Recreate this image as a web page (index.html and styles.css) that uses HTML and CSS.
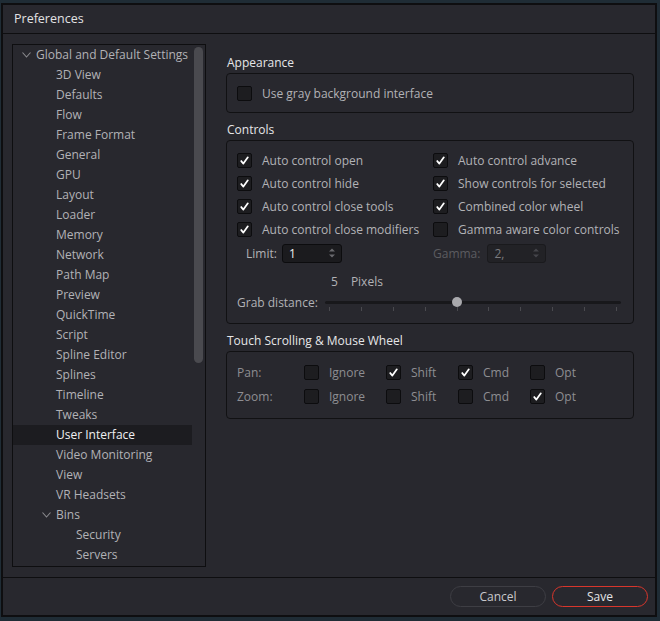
FILE: index.html
```html
<!DOCTYPE html>
<html>
<head>
<meta charset="utf-8">
<link rel="stylesheet" href="styles.css">
</head>
<body>
<div class="window">
  <div class="titlebar">Preferences</div>
  <div class="main">
    <div class="tree">
      <ul class="tree-list">
        <li class="lvl0"><svg class="chev" width="9" height="6" viewBox="0 0 9 6"><polyline points="0.5,0.5 4.5,5 8.5,0.5" fill="none" stroke="#8a8a8e" stroke-width="1.1"/></svg>Global and Default Settings</li>
        <li class="lvl1">3D View</li>
        <li class="lvl1">Defaults</li>
        <li class="lvl1">Flow</li>
        <li class="lvl1">Frame Format</li>
        <li class="lvl1">General</li>
        <li class="lvl1">GPU</li>
        <li class="lvl1">Layout</li>
        <li class="lvl1">Loader</li>
        <li class="lvl1">Memory</li>
        <li class="lvl1">Network</li>
        <li class="lvl1">Path Map</li>
        <li class="lvl1">Preview</li>
        <li class="lvl1">QuickTime</li>
        <li class="lvl1">Script</li>
        <li class="lvl1">Spline Editor</li>
        <li class="lvl1">Splines</li>
        <li class="lvl1">Timeline</li>
        <li class="lvl1">Tweaks</li>
        <li class="lvl1 selected">User Interface</li>
        <li class="lvl1">Video Monitoring</li>
        <li class="lvl1">View</li>
        <li class="lvl1">VR Headsets</li>
        <li class="lvl1 has-chev"><svg class="chev" width="9" height="6" viewBox="0 0 9 6"><polyline points="0.5,0.5 4.5,5 8.5,0.5" fill="none" stroke="#8a8a8e" stroke-width="1.1"/></svg>Bins</li>
        <li class="lvl2">Security</li>
        <li class="lvl2">Servers</li>
      </ul>
      <div class="scroll-track"><div class="scroll-thumb"></div></div>
    </div>

    <div class="settings">
      <div class="heading first">Appearance</div>
      <div class="group group-appearance">
        <label class="cb-row"><span class="cb"></span><span class="cb-text">Use gray background interface</span></label>
      </div>

      <div class="heading">Controls</div>
      <div class="group group-controls">
        <div class="cb-grid">
          <label class="cb-row"><span class="cb checked"><svg viewBox="0 0 14 14"><path d="M3.5 7.6 L5.8 10.3 L10.6 3.6" fill="none" stroke="#fff" stroke-width="1.9" stroke-linecap="round" stroke-linejoin="round"/></svg></span><span class="cb-text">Auto control open</span></label>
          <label class="cb-row"><span class="cb checked"><svg viewBox="0 0 14 14"><path d="M3.5 7.6 L5.8 10.3 L10.6 3.6" fill="none" stroke="#fff" stroke-width="1.9" stroke-linecap="round" stroke-linejoin="round"/></svg></span><span class="cb-text">Auto control advance</span></label>
          <label class="cb-row"><span class="cb checked"><svg viewBox="0 0 14 14"><path d="M3.5 7.6 L5.8 10.3 L10.6 3.6" fill="none" stroke="#fff" stroke-width="1.9" stroke-linecap="round" stroke-linejoin="round"/></svg></span><span class="cb-text">Auto control hide</span></label>
          <label class="cb-row"><span class="cb checked"><svg viewBox="0 0 14 14"><path d="M3.5 7.6 L5.8 10.3 L10.6 3.6" fill="none" stroke="#fff" stroke-width="1.9" stroke-linecap="round" stroke-linejoin="round"/></svg></span><span class="cb-text">Show controls for selected</span></label>
          <label class="cb-row"><span class="cb checked"><svg viewBox="0 0 14 14"><path d="M3.5 7.6 L5.8 10.3 L10.6 3.6" fill="none" stroke="#fff" stroke-width="1.9" stroke-linecap="round" stroke-linejoin="round"/></svg></span><span class="cb-text">Auto control close tools</span></label>
          <label class="cb-row"><span class="cb checked"><svg viewBox="0 0 14 14"><path d="M3.5 7.6 L5.8 10.3 L10.6 3.6" fill="none" stroke="#fff" stroke-width="1.9" stroke-linecap="round" stroke-linejoin="round"/></svg></span><span class="cb-text">Combined color wheel</span></label>
          <label class="cb-row"><span class="cb checked"><svg viewBox="0 0 14 14"><path d="M3.5 7.6 L5.8 10.3 L10.6 3.6" fill="none" stroke="#fff" stroke-width="1.9" stroke-linecap="round" stroke-linejoin="round"/></svg></span><span class="cb-text">Auto control close modifiers</span></label>
          <label class="cb-row"><span class="cb"></span><span class="cb-text">Gamma aware color controls</span></label>
        </div>
        <div class="spin-row">
          <div class="spin-field">
            <span class="spin-label">Limit:</span>
            <div class="spin"><span class="spin-val">1</span><svg class="spin-arrows" width="8" height="12" viewBox="0 0 8 12"><path d="M1 4.5 L4 1.5 L7 4.5 Z M1 7.5 L4 10.5 L7 7.5 Z" fill="#6a6a6e"/></svg></div>
          </div>
          <div class="spin-field disabled">
            <span class="spin-label">Gamma:</span>
            <div class="spin"><span class="spin-val">2,</span><svg class="spin-arrows" width="8" height="12" viewBox="0 0 8 12"><path d="M1 4.5 L4 1.5 L7 4.5 Z M1 7.5 L4 10.5 L7 7.5 Z" fill="#45454a"/></svg></div>
          </div>
        </div>
        <div class="pixels-row"><span class="px-num">5</span><span>Pixels</span></div>
        <div class="grab-row">
          <span class="grab-label">Grab distance:</span>
          <div class="slider">
            <div class="slider-track"></div>
            <div class="slider-thumb"></div>
            <div class="ticks">
              <i></i><i></i><i></i><i></i><i></i><i></i><i></i><i></i><i></i><i></i>
            </div>
          </div>
        </div>
      </div>

      <div class="heading">Touch Scrolling &amp; Mouse Wheel</div>
      <div class="group group-touch">
        <div class="touch-grid">
          <span class="t-label">Pan:</span>
          <label class="cb-row"><span class="cb"></span><span class="cb-text">Ignore</span></label>
          <label class="cb-row"><span class="cb checked"><svg viewBox="0 0 14 14"><path d="M3.5 7.6 L5.8 10.3 L10.6 3.6" fill="none" stroke="#fff" stroke-width="1.9" stroke-linecap="round" stroke-linejoin="round"/></svg></span><span class="cb-text">Shift</span></label>
          <label class="cb-row"><span class="cb checked"><svg viewBox="0 0 14 14"><path d="M3.5 7.6 L5.8 10.3 L10.6 3.6" fill="none" stroke="#fff" stroke-width="1.9" stroke-linecap="round" stroke-linejoin="round"/></svg></span><span class="cb-text">Cmd</span></label>
          <label class="cb-row"><span class="cb"></span><span class="cb-text">Opt</span></label>
          <span class="t-label">Zoom:</span>
          <label class="cb-row"><span class="cb"></span><span class="cb-text">Ignore</span></label>
          <label class="cb-row"><span class="cb"></span><span class="cb-text">Shift</span></label>
          <label class="cb-row"><span class="cb"></span><span class="cb-text">Cmd</span></label>
          <label class="cb-row"><span class="cb checked"><svg viewBox="0 0 14 14"><path d="M3.5 7.6 L5.8 10.3 L10.6 3.6" fill="none" stroke="#fff" stroke-width="1.9" stroke-linecap="round" stroke-linejoin="round"/></svg></span><span class="cb-text">Opt</span></label>
        </div>
      </div>
    </div>
  </div>
  <div class="footer">
    <button class="btn">Cancel</button>
    <button class="btn save">Save</button>
  </div>
</div>
</body>
</html>
```

FILE: styles.css
```css
* { box-sizing: border-box; }

html, body {
  margin: 0;
  padding: 0;
}

body {
  width: 660px;
  height: 621px;
  background: #1f2c35;
  font-family: "Open Sans", "DejaVu Sans", sans-serif;
  font-size: 12px;
  color: #b4b4b8;
  padding: 3px 0 0 1px;
  overflow: hidden;
}

.window {
  width: 656px;
  height: 614px;
  background: #28282e;
  border: 2px solid #0e0e10;
  display: flex;
  flex-direction: column;
}

.titlebar {
  height: 29px;
  flex: none;
  border-bottom: 1px solid #0e0e10;
  padding-left: 11px;
  line-height: 28px;
  font-size: 12.5px;
  color: #e2e2e4;
}

.main {
  flex: 1;
  display: flex;
  padding: 10px 0 10px 9px;
  border-bottom: 1px solid #0e0e10;
}

/* ---- tree ---- */
.tree {
  width: 194px;
  flex: none;
  border: 1px solid #0e0e10;
  display: flex;
  padding-right: 2px;
}

.tree-list {
  list-style: none;
  margin: 0;
  padding: 0;
  width: 179px;
  flex: none;
}

.tree-list li {
  height: 20px;
  line-height: 20px;
  white-space: nowrap;
  display: flex;
  align-items: center;
  color: #b2b2b6;
}

.tree-list .lvl0 { padding-left: 9px; }
.tree-list .lvl1 { padding-left: 43px; }
.tree-list .lvl1.has-chev { padding-left: 29px; }
.tree-list .lvl2 { padding-left: 63px; }

.chev { margin-right: 5px; flex: none; }

.tree-list li.selected {
  background: #1c1c20;
  color: #f0f0f2;
}

.scroll-track {
  flex: 1;
  padding: 2px 0 0 2px;
}

.scroll-thumb {
  width: 9px;
  height: 316px;
  background: #4a4a4f;
  border-radius: 5px;
}

/* ---- settings ---- */
.settings {
  width: 408px;
  margin-left: 20px;
  display: flex;
  flex-direction: column;
}

.heading {
  height: 16px;
  line-height: 16px;
  margin: 9px 0 2px 1px;
  color: #e6e6e8;
  font-size: 12px;
}

.heading.first { margin-top: 11px; }

.group {
  border: 1px solid #111113;
  border-radius: 4px;
  padding: 0 10px;
}

.group-appearance {
  height: 40px;
  display: flex;
  align-items: center;
}

.cb-row {
  display: flex;
  align-items: center;
  white-space: nowrap;
}

.cb {
  width: 15px;
  height: 15px;
  flex: none;
  background: #1d1d20;
  border: 1px solid #0c0c0e;
  border-radius: 2px;
  display: flex;
  align-items: center;
  justify-content: center;
}

.cb svg { width: 13px; height: 13px; }

.cb-text {
  margin-left: 10px;
  color: #b2b2b6;
}

.group-controls {
  height: 184px;
  padding-top: 8px;
}

.cb-grid {
  display: grid;
  grid-template-columns: 196px auto;
  grid-auto-rows: 23px;
}

.spin-row {
  display: flex;
  height: 24px;
  align-items: center;
}

.spin-field {
  display: flex;
  align-items: center;
}

.spin-field:first-child {
  width: 196px;
  padding-left: 9px;
}

.spin-label { margin-right: 5px; color: #b2b2b6; }

.spin {
  width: 60px;
  height: 19px;
  background: #1b1b1e;
  border: 1px solid #0c0c0e;
  border-radius: 3px;
  display: flex;
  align-items: center;
  justify-content: space-between;
  padding: 0 5px 0 6px;
}

.spin-val { color: #f0f0f2; }

.spin-field.disabled .spin-label { color: #5c5c60; margin-right: 7px; }
.spin-field.disabled .spin { width: 59px; background: #222226; border-color: #1a1a1d; }
.spin-field.disabled .spin-val { color: #7a7a7e; }

.pixels-row {
  height: 20px;
  margin-top: 6px;
  display: flex;
  align-items: center;
  padding-left: 94px;
  color: #b2b2b6;
}

.px-num { margin-right: 13px; }

.grab-row {
  height: 22px;
  display: flex;
  align-items: center;
}

.grab-label { width: 88px; color: #b2b2b6; }

.slider {
  position: relative;
  width: 296px;
  height: 22px;
}

.slider-track {
  position: absolute;
  left: 0;
  right: 0;
  top: 10px;
  height: 3px;
  background: #18181b;
  border-radius: 2px;
}

.slider-thumb {
  position: absolute;
  left: 127px;
  top: 6px;
  width: 10px;
  height: 10px;
  border-radius: 50%;
  background: #a9a9ad;
}

.ticks {
  position: absolute;
  left: 4px;
  right: 4px;
  top: 16px;
  display: flex;
  justify-content: space-between;
}

.ticks i {
  display: block;
  width: 1px;
  height: 4px;
  background: #4a4a4f;
}

.group-touch {
  height: 68px;
  padding-top: 8px;
}

.touch-grid {
  display: grid;
  grid-template-columns: 67px 82px 72px 72px auto;
  grid-auto-rows: 24px;
  align-items: center;
}

.touch-grid .cb-text { margin-left: 10px; }

.t-label { color: #8e8e92; }
.group-touch .cb-text { color: #8e8e92; }

/* ---- footer ---- */
.footer {
  height: 37px;
  flex: none;
  display: flex;
  justify-content: flex-end;
  align-items: flex-start;
  padding: 8px 7px 0 0;
  gap: 6px;
}

.btn {
  width: 96px;
  height: 21px;
  border-radius: 11px;
  border: 1px solid #3e3e44;
  background: #28282e;
  color: #c8c8cc;
  font-family: "Open Sans", "DejaVu Sans", sans-serif;
  font-size: 12px;
  padding: 0;
  line-height: 18px;
}

.btn.save {
  border: 1.5px solid #d8362c;
  color: #e4e4e6;
}
```
